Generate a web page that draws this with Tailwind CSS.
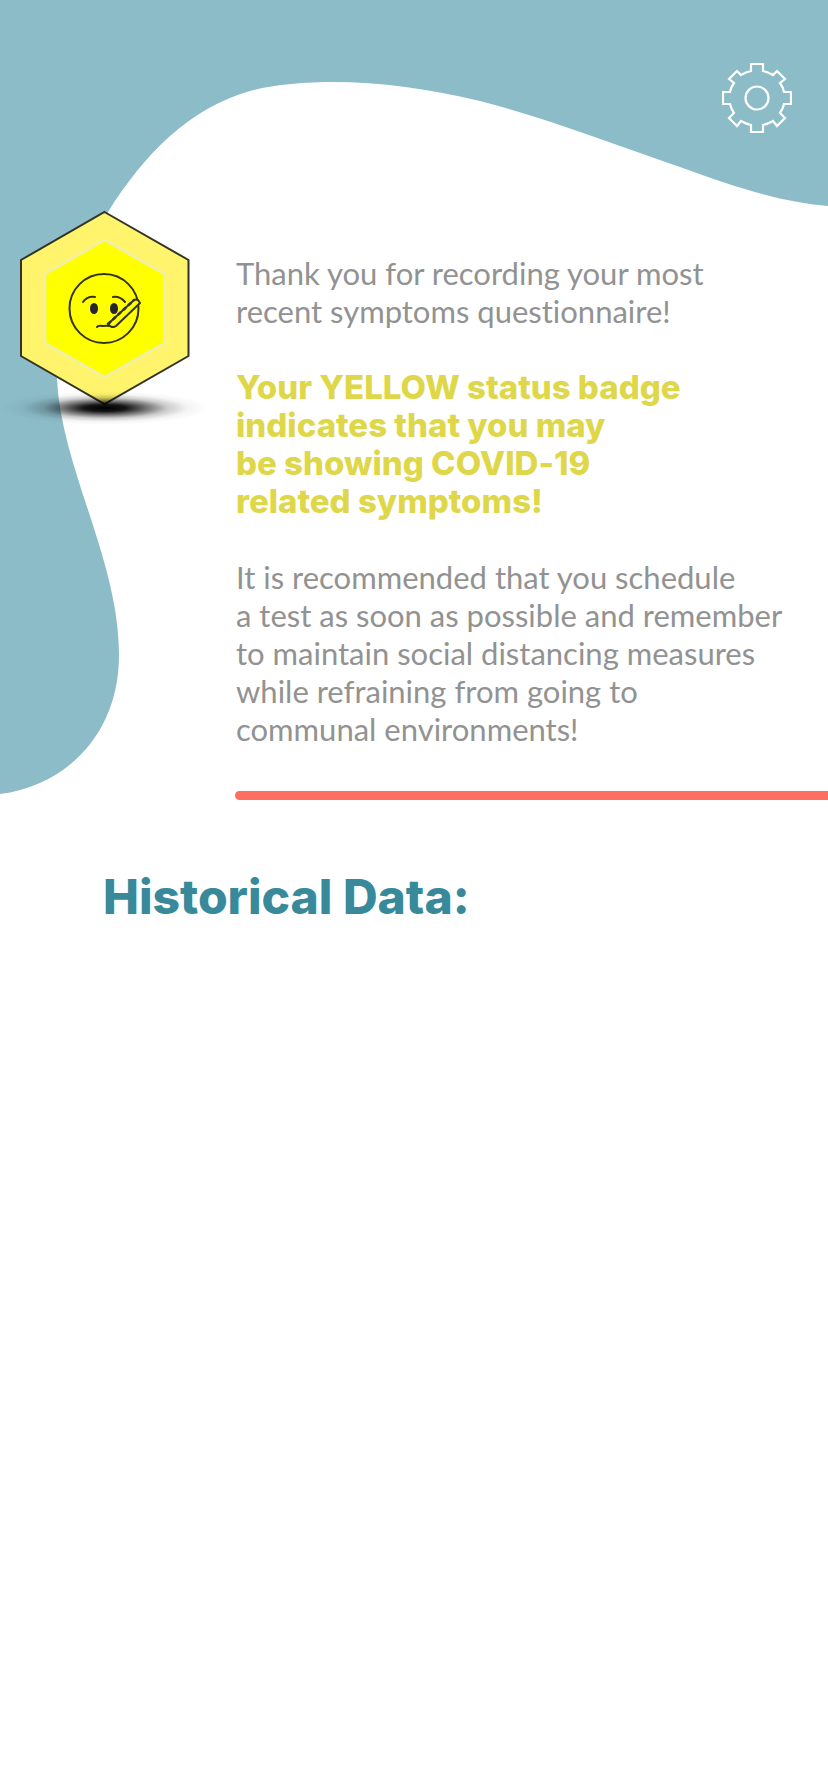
<!DOCTYPE html>
<html lang="en">
<head>
<meta charset="utf-8">
<meta name="viewport" content="width=device-width, initial-scale=1">
<title>Status</title>
<script src="https://cdn.jsdelivr.net/npm/@tailwindcss/browser@4"></script>
</head>
<body class="min-h-screen bg-white font-['Lato',sans-serif] [font-variant-ligatures:none]">
<div class="relative">
  <svg class="absolute inset-x-0 top-0 w-full" viewBox="0 0 828 800" aria-hidden="true">
    <path fill="#8bbcc8" d="M0 0H828V206C780 202 735 187 680 167C610 143 550 119 480 101C430 89 380 82 333 82C305 82 270 85 250 91C190 108 145 153 108 212C70 270 52 330 57 380C62 470 119 560 119 655C119 735 65 786 0 794Z"/>
  </svg>

  <header class="relative flex justify-end pt-[63px] pr-9">
    <button type="button" aria-label="Settings" class="size-[70px] cursor-pointer">
      <svg class="size-full" viewBox="-35 -35 70 70" fill="none" stroke="#fff" stroke-width="2.2">
        <path d="M-6-27V-34H6V-27Q11-26 16-23L20-27L28-19L23-15Q26-11 27-6H34V6H27Q26 11 23 15L28 20L20 28L16 23Q11 26 6 27V34H-6V27Q-11 26-16 23L-20 28L-28 20L-23 15Q-26 11-27 6H-34V-6H-27Q-26-11-23-15L-28-19L-20-27L-16-23Q-11-26-6-27Z"/>
        <circle r="11.500"/>
      </svg>
    </button>
  </header>

  <main class="relative">
    <section class="flex items-start pt-[73px]">
      <svg class="w-[212px] shrink-0" viewBox="0 206 212 224" role="img" aria-label="Yellow status badge">
        <defs>
          <radialGradient id="shadow">
            <stop offset="0" stop-color="#000"/>
            <stop offset=".2" stop-color="#000" stop-opacity=".92"/>
            <stop offset=".4" stop-color="#000" stop-opacity=".55"/>
            <stop offset=".6" stop-color="#000" stop-opacity=".2"/>
            <stop offset=".8" stop-color="#000" stop-opacity=".04"/>
            <stop offset="1" stop-color="#000" stop-opacity="0"/>
          </radialGradient>
        </defs>
        <path d="M104.500 212L188.500 260V356L104.500 404L21 356V260Z" fill="#fff46b" stroke="#333328" stroke-width="2"/>
        <path d="M104.500 240L164.500 274V343L104.500 377L45 343V274Z" fill="#ff0" stroke="#efefb0" stroke-width="2.5"/>
        <ellipse cx="105" cy="408" rx="104" ry="17" fill="url(#shadow)"/>
        <g fill="none" stroke="#33331c" stroke-width="2" stroke-linecap="round" stroke-linejoin="round">
          <circle cx="104" cy="308.500" r="34.500"/>
          <path d="M83 302Q87 296 95 297M113 297Q120 296 125 302M97 327Q98 325 103 326Q109 325 113 327"/>
          <path d="M108 324L134 300Q136 299 138 300L140 303L116 326Q113 328 110 326Z" fill="#ff0"/>
          <path d="M108 324L134 300" stroke-width="2.500" stroke-dasharray="3 4"/>
        </g>
        <ellipse cx="94" cy="308.500" rx="4" ry="5.500" fill="#262630"/>
        <ellipse cx="114" cy="308.500" rx="4" ry="5.500" fill="#262630"/>
      </svg>
      <div class="flex grow flex-col gap-[38px] pt-12 pl-6 text-[31px] leading-[38px] text-[#929292]">
        <p>Thank you for recording your most<br>recent symptoms questionnaire!</p>
        <p class="font-['Inter',sans-serif] text-[33px] font-extrabold text-[#dfd74a]">Your YELLOW status badge<br>indicates that you may<br>be showing COVID-19<br>related symptoms!</p>
        <p>It is recommended that you schedule<br>a test as soon as possible and remember<br>to maintain social distancing measures<br>while refraining from going to<br>communal environments!</p>
      </div>
    </section>

    <div class="mt-[43px] ml-[235px] h-[9px] rounded-l-full bg-[#ff6f61]"></div>

    <h1 class="mt-[68px] ml-[103px] font-['Inter',sans-serif] text-[48px] leading-[58px] font-extrabold text-[#388a9b]">Historical Data:</h1>
  </main>
</div>
</body>
</html>
